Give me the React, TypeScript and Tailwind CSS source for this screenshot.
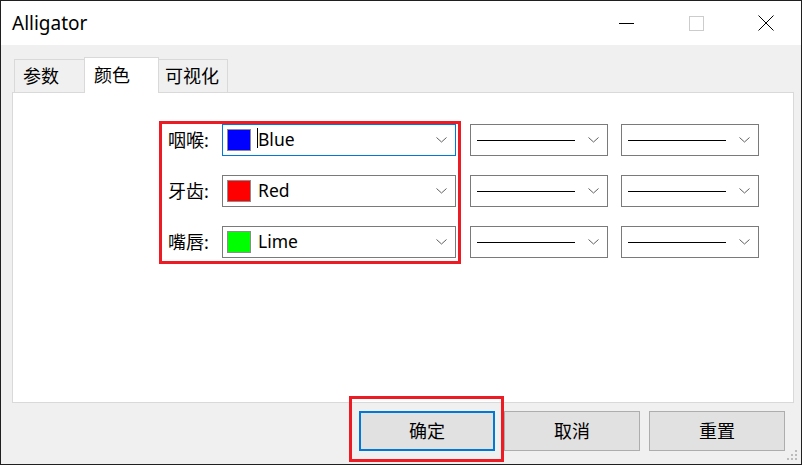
import React from 'react'

// ─── Data ─────────────────────────────────────────────────────────────────────

type Row = { label: string; name: string; swatch: string; focused?: boolean }

const ROWS: Row[] = [
  { label: '咽喉:', name: 'Blue', swatch: 'bg-[#0000ff]', focused: true },
  { label: '牙齿:', name: 'Red', swatch: 'bg-[#ff0000]' },
  { label: '嘴唇:', name: 'Lime', swatch: 'bg-[#00ff00]' },
]

const FONT = { fontFamily: '"Noto Sans", "Noto Sans CJK SC", sans-serif' }

// ─── Pieces ───────────────────────────────────────────────────────────────────

function Chevron() {
  return (
    <svg width="11" height="6" viewBox="0 0 11 6" className="shrink-0">
      <polyline points="0.5,0.5 5.5,5 10.5,0.5" fill="none" stroke="#5f5f5f" strokeWidth="1" />
    </svg>
  )
}

function ColorCombo({ row }: { row: Row }) {
  return (
    <div
      className={`flex h-[32px] w-[234px] items-center bg-white border ${
        row.focused ? 'border-[#0078d7]' : 'border-[#7a7a7a]'
      }`}
    >
      <span className={`ml-[4px] h-[22px] w-[24px] shrink-0 border border-[#8c8c8c] ${row.swatch}`} />
      <span className="relative ml-[7px] text-[17.5px] leading-none text-black">
        {row.focused && <span className="absolute -left-[1px] top-[-3px] h-[20px] w-px bg-black" />}
        {row.name}
      </span>
      <span className="ml-auto mr-[8px] flex">
        <Chevron />
      </span>
    </div>
  )
}

function LineCombo() {
  return (
    <div className="flex h-[32px] w-[138px] items-center bg-white border border-[#7a7a7a]">
      <span className="ml-[6px] h-px w-[98px] bg-black" />
      <span className="ml-auto mr-[8px] flex">
        <Chevron />
      </span>
    </div>
  )
}

function Button({ label, primary }: { label: string; primary?: boolean }) {
  return (
    <div className="relative">
      <button
        type="button"
        className={`flex h-[40px] w-[136px] items-center justify-center bg-[#e1e1e1] text-[18px] text-black ${
          primary ? 'border-2 border-[#0078d7]' : 'border border-[#adadad]'
        }`}
      >
        {label}
      </button>
      {/* annotation frame */}
      {primary && (
        <div className="pointer-events-none absolute -left-[10px] -right-[9px] -top-[15px] -bottom-[11px] border-[3px] border-[#ed1c24]" />
      )}
    </div>
  )
}

// ─── Component ────────────────────────────────────────────────────────────────

export default function App() {
  return (
    <div
      className="relative flex h-[465px] w-[802px] flex-col overflow-hidden border border-[#1f1f1f] bg-[#f0f0f0]"
      style={FONT}
    >
      {/* ── Title bar ─────────────────────────────────────────────────── */}
      <div className="flex h-[44px] shrink-0 items-center bg-white">
        <span className="pl-[11px] text-[19px] text-black">Alligator</span>
        <div className="ml-auto flex h-full">
          <div className="flex w-[70px] items-center justify-center">
            <span className="h-px w-[15px] bg-black" />
          </div>
          <div className="flex w-[70px] items-center justify-center">
            <span className="h-[15px] w-[15px] border border-[#cccccc]" />
          </div>
          <div className="flex w-[70px] items-center justify-center">
            <svg width="16" height="16" viewBox="0 0 16 16">
              <path d="M0.5 0.5 L15.5 15.5 M15.5 0.5 L0.5 15.5" stroke="#000" strokeWidth="1" />
            </svg>
          </div>
        </div>
      </div>

      {/* ── Tabs ──────────────────────────────────────────────────────── */}
      <div className="flex items-end pl-[13px] pt-[12px]">
        <div className="flex h-[33px] w-[70px] items-center border-l border-t border-[#d9d9d9] pl-[8px] text-[18px] text-black">
          参数
        </div>
        <div className="relative z-10 -mb-px flex h-[36px] w-[75px] items-center border-x border-t border-[#d9d9d9] bg-white pl-[9px] text-[18px] text-black">
          颜色
        </div>
        <div className="flex h-[33px] w-[69px] items-center border-r border-t border-[#d9d9d9] pl-[6px] text-[18px] text-black">
          可视化
        </div>
      </div>

      {/* ── Panel ─────────────────────────────────────────────────────── */}
      <div className="ml-[11px] mr-[7px] h-[311px] shrink-0 border border-[#d9d9d9] bg-white pl-[146px] pt-[28px]">
        <div className="flex items-start">
          {/* highlighted colour column */}
          <div className="flex w-[302px] flex-col gap-[19px] border-[3px] border-[#ed1c24] pb-[3px]">
            {ROWS.map(r => (
              <div key={r.label} className="flex h-[32px] items-center">
                <span className="w-[60px] pl-[6px] text-[18px] text-black">{r.label}</span>
                <ColorCombo row={r} />
              </div>
            ))}
          </div>

          <div className="ml-[9px] mt-[3px] flex flex-col gap-[19px]">
            {ROWS.map(r => (
              <LineCombo key={r.label} />
            ))}
          </div>

          <div className="ml-[13px] mt-[3px] flex flex-col gap-[19px]">
            {ROWS.map(r => (
              <LineCombo key={r.label} />
            ))}
          </div>
        </div>
      </div>

      {/* ── Buttons ───────────────────────────────────────────────────── */}
      <div className="mt-[8px] flex justify-end gap-[9px] pr-[16px]">
        <Button label="确定" primary />
        <Button label="取消" />
        <Button label="重置" />
      </div>

      {/* resize grip */}
      <svg className="absolute bottom-[2px] right-[2px]" width="12" height="12" viewBox="0 0 12 12">
        <rect x="8" y="0" width="2" height="2" fill="#bcbcbc" />
        <rect x="4" y="4" width="2" height="2" fill="#bcbcbc" />
        <rect x="8" y="4" width="2" height="2" fill="#bcbcbc" />
        <rect x="0" y="8" width="2" height="2" fill="#bcbcbc" />
        <rect x="4" y="8" width="2" height="2" fill="#bcbcbc" />
        <rect x="8" y="8" width="2" height="2" fill="#bcbcbc" />
      </svg>
    </div>
  )
}
